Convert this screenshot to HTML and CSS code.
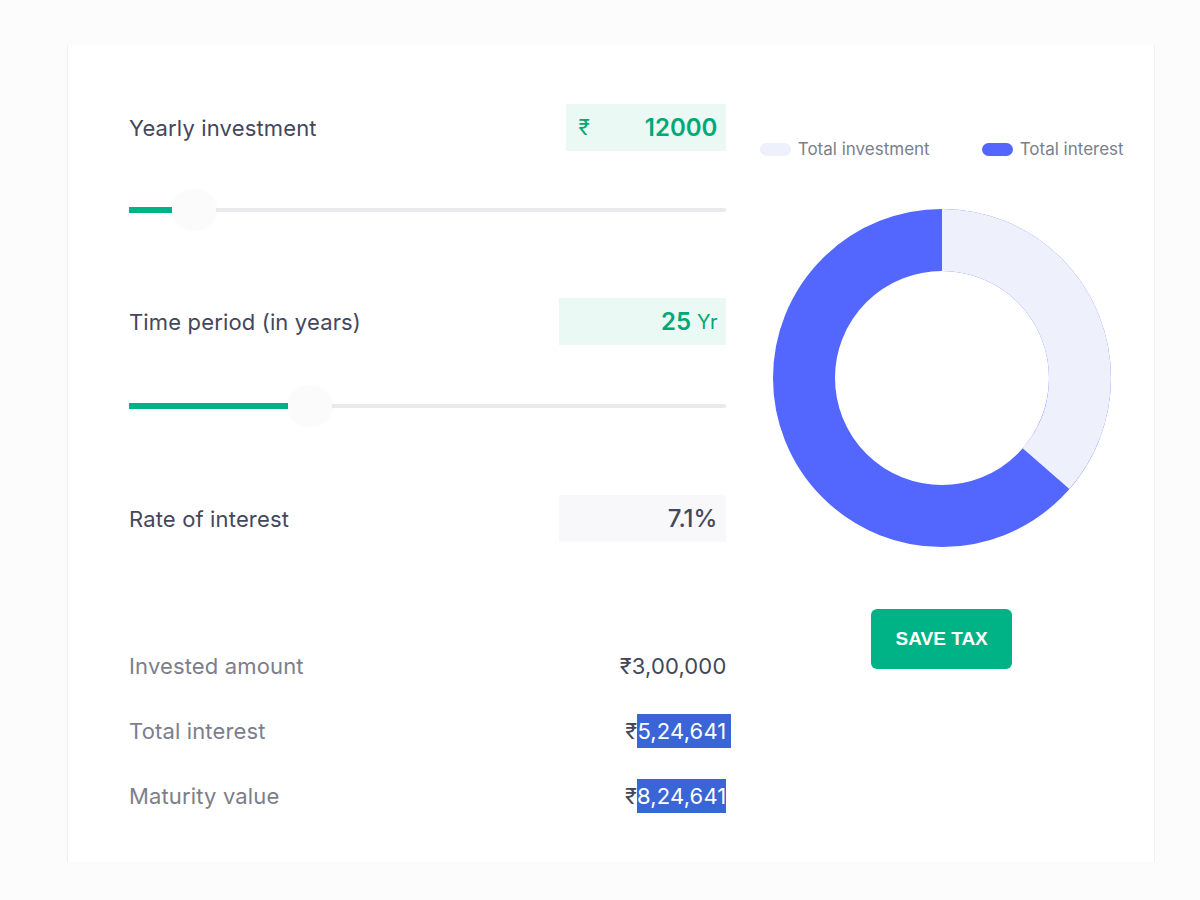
FILE: index.html
```html
<!DOCTYPE html>
<html lang="en">
<head>
    <meta charset="UTF-8">
    <meta name="viewport" content="width=device-width, initial-scale=1.0">
    <title>PPF Calculator</title>
    <link rel="stylesheet" href="styles.css">
</head>
<body>
    <div class="card">
        <div class="inputs">
            <div class="field">
                <div class="field-head">
                    <span class="field-label">Yearly investment</span>
                    <div class="value-box green wide">
                        <span class="unit">₹</span>
                        <span class="num">12000</span>
                    </div>
                </div>
                <div class="slider">
                    <div class="track"></div>
                    <div class="fill" style="width: 43px"></div>
                    <div class="thumb" style="left: 43px"></div>
                </div>
            </div>

            <div class="field">
                <div class="field-head">
                    <span class="field-label">Time period (in years)</span>
                    <div class="value-box green">
                        <span class="num">25</span>
                        <span class="suffix">Yr</span>
                    </div>
                </div>
                <div class="slider">
                    <div class="track"></div>
                    <div class="fill" style="width: 159px"></div>
                    <div class="thumb" style="left: 159px"></div>
                </div>
            </div>

            <div class="field">
                <div class="field-head">
                    <span class="field-label">Rate of interest</span>
                    <div class="value-box grey">
                        <span class="num">7.1%</span>
                    </div>
                </div>
            </div>

            <div class="results">
                <div class="result-row">
                    <span class="result-label">Invested amount</span>
                    <span class="result-value">₹3,00,000</span>
                </div>
                <div class="result-row">
                    <span class="result-label">Total interest</span>
                    <span class="result-value extend">₹<span class="mark">5,24,641</span></span>
                </div>
                <div class="result-row">
                    <span class="result-label">Maturity value</span>
                    <span class="result-value">₹<span class="mark">8,24,641</span></span>
                </div>
            </div>
        </div>

        <div class="chart-col">
            <div class="legend">
                <div class="legend-item"><span class="swatch light"></span>Total investment</div>
                <div class="legend-item"><span class="swatch blue"></span>Total interest</div>
            </div>
            <svg class="donut" width="340" height="340" viewBox="0 0 340 340">
                <circle cx="170" cy="170" r="138" fill="none" stroke="#5367ff" stroke-width="62"/>
                <circle cx="170" cy="170" r="138" fill="none" stroke="#eef0fc" stroke-width="62"
                        stroke-dasharray="315.6 867.1" transform="rotate(-90 170 170)"/>
            </svg>
            <button class="save-btn">SAVE TAX</button>
        </div>
    </div>
</body>
</html>
```

FILE: styles.css
```css
body {
    margin: 0;
    background: #fcfcfd;
    font-family: Inter, "Noto Sans", sans-serif;
    color: #44475b;
}

.card {
    margin: 45px 0 0 67px;
    width: 1088px;
    height: 817px;
    box-sizing: border-box;
    background: #fff;
    border-left: 1px solid #f0f0f3;
    border-right: 1px solid #f0f0f3;
    padding: 59px 0 0 61px;
    display: flex;
}

.inputs {
    width: 598px;
}

.field-head {
    display: flex;
    justify-content: space-between;
    align-items: center;
    height: 47px;
}

.field-label {
    font-size: 22px;
    letter-spacing: 0.15px;
    color: #44475b;
}

.value-box {
    width: 167px;
    height: 47px;
    box-sizing: border-box;
    padding: 0 9px 0 12px;
    display: flex;
    align-items: center;
    justify-content: flex-end;
    font-size: 24px;
    font-weight: 600;
}

.value-box.wide {
    width: 160px;
    justify-content: space-between;
}

.value-box.green {
    background: #ebf9f5;
    color: #00a877;
}

.value-box.grey {
    background: #f8f8fa;
    color: #44475b;
    font-weight: 500;
}

.unit {
    font-size: 21px;
    font-weight: 400;
}

.suffix {
    font-size: 20px;
    font-weight: 400;
    margin-left: 6px;
}

.slider {
    position: relative;
    height: 40px;
    margin: 39px 0 68px;
}

.field:nth-child(2) .slider {
    margin: 41px 0 69px;
}

.track {
    position: absolute;
    left: 0;
    right: 0;
    top: 18px;
    height: 4px;
    background: #e9e9ee;
    border-radius: 2px;
}

.fill {
    position: absolute;
    left: 0;
    top: 17px;
    height: 6px;
    background: #00b386;
}

.thumb {
    position: absolute;
    top: 0;
    width: 44px;
    height: 40px;
    border-radius: 50%;
    background: #fbfbfc;
    box-shadow: 0 0 4px rgba(0, 0, 0, 0.03);
}

.results {
    margin-top: 109px;
    display: flex;
    flex-direction: column;
    gap: 35px;
}

.result-row {
    display: flex;
    justify-content: space-between;
    align-items: center;
    height: 30px;
    font-size: 22px;
    letter-spacing: 0.15px;
}

.result-label {
    color: #7c7e8c;
}

.result-value {
    color: #44475b;
}

.result-value.extend {
    margin-right: -5px;
}

.result-value.extend .mark {
    padding-right: 5px;
}

.mark {
    background: #3a65d6;
    color: #fff;
    padding: 4px 0;
}

.chart-col {
    width: 428px;
    box-sizing: border-box;
    padding: 35px 0 0 3px;
    display: flex;
    flex-direction: column;
    align-items: center;
}

.legend {
    display: flex;
    gap: 52px;
    height: 20px;
    align-items: center;
    font-size: 17px;
    color: #7c7e8c;
}

.legend-item {
    display: flex;
    align-items: center;
    gap: 7px;
}

.swatch {
    width: 31px;
    height: 13px;
    border-radius: 7px;
}

.swatch.light {
    background: #eef0fc;
}

.swatch.blue {
    background: #5367ff;
}

.donut {
    margin-top: 49px;
}

.save-btn {
    margin-top: 61px;
    width: 141px;
    height: 60px;
    border: none;
    border-radius: 6px;
    background: #00b386;
    color: #fff;
    font-family: "Liberation Sans", Arial, sans-serif;
    font-size: 19px;
    font-weight: 700;
    cursor: pointer;
}
```
